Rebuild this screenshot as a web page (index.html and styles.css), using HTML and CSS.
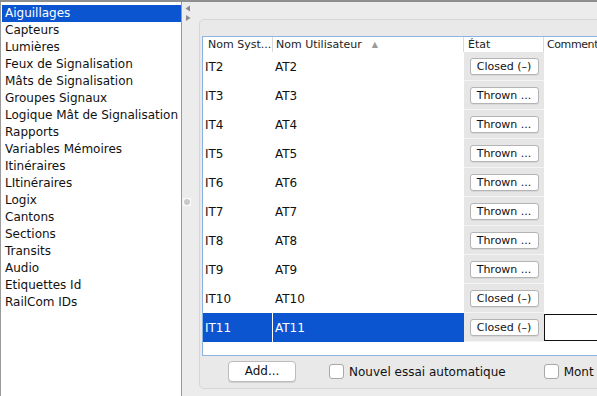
FILE: index.html
```html
<!DOCTYPE html>
<html lang="fr">
<head>
<meta charset="utf-8">
<link rel="stylesheet" href="styles.css">
</head>
<body>
<div class="topline"></div>
<div class="app">
  <ul class="list">
    <li class="sel">Aiguillages</li>
    <li>Capteurs</li>
    <li>Lumières</li>
    <li>Feux de Signalisation</li>
    <li>Mâts de Signalisation</li>
    <li>Groupes Signaux</li>
    <li>Logique Mât de Signalisation</li>
    <li>Rapports</li>
    <li>Variables Mémoires</li>
    <li>Itinéraires</li>
    <li>LItinéraires</li>
    <li>Logix</li>
    <li>Cantons</li>
    <li>Sections</li>
    <li>Transits</li>
    <li>Audio</li>
    <li>Etiquettes Id</li>
    <li>RailCom IDs</li>
  </ul>
  <div class="splitter">
    <div class="arrows">
      <svg width="6" height="16" viewBox="0 0 6 16"><path d="M5 0.5 L0.5 3.5 L5 6.5 Z" fill="#8a8a8a"/><path d="M1 10 L5.5 13 L1 16 Z" fill="#8a8a8a"/></svg>
    </div>
    <div class="grip"><span></span></div>
  </div>
  <div class="right">
    <div class="panel">
      <div class="strip"></div>
      <div class="table">
        <div class="row head">
          <div class="c c1">Nom Syst...</div>
          <div class="c c2">Nom Utilisateur <span class="sort">▲</span></div>
          <div class="c c3">État</div>
          <div class="c c4">Comment</div>
        </div>
        <div class="row"><div class="c c1">IT2</div><div class="c c2">AT2</div><div class="c c3"><span class="btn">Closed (–)</span></div><div class="c c4"></div></div>
        <div class="row"><div class="c c1">IT3</div><div class="c c2">AT3</div><div class="c c3"><span class="btn">Thrown ...</span></div><div class="c c4"></div></div>
        <div class="row"><div class="c c1">IT4</div><div class="c c2">AT4</div><div class="c c3"><span class="btn">Thrown ...</span></div><div class="c c4"></div></div>
        <div class="row"><div class="c c1">IT5</div><div class="c c2">AT5</div><div class="c c3"><span class="btn">Thrown ...</span></div><div class="c c4"></div></div>
        <div class="row"><div class="c c1">IT6</div><div class="c c2">AT6</div><div class="c c3"><span class="btn">Thrown ...</span></div><div class="c c4"></div></div>
        <div class="row"><div class="c c1">IT7</div><div class="c c2">AT7</div><div class="c c3"><span class="btn">Thrown ...</span></div><div class="c c4"></div></div>
        <div class="row"><div class="c c1">IT8</div><div class="c c2">AT8</div><div class="c c3"><span class="btn">Thrown ...</span></div><div class="c c4"></div></div>
        <div class="row"><div class="c c1">IT9</div><div class="c c2">AT9</div><div class="c c3"><span class="btn">Thrown ...</span></div><div class="c c4"></div></div>
        <div class="row"><div class="c c1">IT10</div><div class="c c2">AT10</div><div class="c c3"><span class="btn">Closed (–)</span></div><div class="c c4"></div></div>
        <div class="row selrow"><div class="c c1">IT11</div><div class="c c2">AT11</div><div class="c c3"><span class="btn">Closed (–)</span></div><div class="c c4"><div class="edit"></div></div></div>
      </div>
      <div class="bottom">
        <span class="addbtn">Add...</span>
        <label class="chk chk1"><span class="box"></span>Nouvel essai automatique</label>
        <label class="chk chk2"><span class="box"></span>Mont</label>
      </div>
    </div>
  </div>
</div>
</body>
</html>
```
FILE: styles.css
```css
html, body {
  margin: 0;
  padding: 0;
  width: 597px;
  height: 396px;
  overflow: hidden;
  background: #ececec;
  font-family: "DejaVu Sans", sans-serif;
  color: #111;
}
.topline {
  height: 2px;
  background: #8e8e8e;
}
.app {
  display: flex;
  height: 394px;
}
.list {
  list-style: none;
  margin: 0;
  padding: 3px 0 0 1px;
  width: 179px;
  background: #fff;
  border-left: 1px solid #9a9a9a;
  border-right: 1px solid #9a9a9a;
  font-size: 12px;
}
.list li {
  height: 17px;
  line-height: 17px;
  padding-left: 3px;
  white-space: nowrap;
}
.list li.sel {
  background: #0b55d0;
  color: #fff;
}
.splitter {
  width: 16px;
  display: flex;
  flex-direction: column;
  align-items: flex-start;
}
.arrows {
  margin: 3px 0 0 3px;
  height: 16px;
}
.arrows svg { display: block; }
.grip {
  margin: 177px 0 0 1px;
  width: 8px;
  height: 8px;
  background: #fafafa;
  display: flex;
  align-items: center;
  justify-content: center;
}
.grip span {
  width: 6px;
  height: 6px;
  border-radius: 50%;
  background: #c8c8c8;
}
.right {
  flex: 1;
  padding: 17px 0 0 1px;
  overflow: hidden;
}
.panel {
  width: 420px;
  height: 368px;
  border: 1px solid #d6d6d6;
  border-radius: 5px;
  background: #e9e9e9;
  display: flex;
  flex-direction: column;
}
.strip {
  height: 16px;
}
.table {
  margin-left: 2px;
  height: 318px;
  border: 1px solid #8db3e2;
  border-right: none;
  background: #fff;
  font-size: 12px;
}
.row {
  display: flex;
  height: 29px;
  align-items: stretch;
}
.row.head {
  height: 15px;
  font-size: 11px;
  color: #222;
}
.c {
  display: flex;
  align-items: center;
  white-space: nowrap;
  overflow: hidden;
  box-sizing: border-box;
  flex: none;
}
.c1 { width: 70px; padding-left: 2px; }
.c2 { width: 191px; padding-left: 2px; }
.c3 { width: 80px; justify-content: center; background: #e6e6e6; border-bottom: 1px solid #f4f4f4; }
.c4 { width: 60px; padding-left: 0; }
.head .c { background: #fff; border: none; }
.head .c1 { padding-left: 5px; border-right: 1px solid #d9d9d9; }
.head .c2 { padding-left: 3px; border-right: 1px solid #d9d9d9; }
.head .c3 { padding-left: 4px; justify-content: flex-start; border-right: 1px solid #d9d9d9; }
.head .c4 { padding-left: 3px; letter-spacing: -0.4px; }
.sort {
  font-size: 8px;
  color: #9a9a9a;
  margin-left: 10px;
}
.btn {
  display: inline-block;
  width: 67px;
  height: 15px;
  line-height: 15px;
  text-align: center;
  font-size: 11px;
  background: #fff;
  border: 1px solid #b4b4b4;
  border-radius: 3px;
  box-shadow: 0 1px 0 #d8d8d8;
}
.selrow .c1, .selrow .c2 {
  background: #0b55d0;
  color: #fff;
}
.selrow .c1 { border-right: 1px solid #fff; }
.edit {
  width: 56px;
  height: 27px;
  border: 1px solid #111;
  background: #fff;
  box-sizing: border-box;
}
.bottom {
  display: flex;
  align-items: center;
  height: 31px;
  font-size: 12px;
}
.addbtn {
  margin-left: 28px;
  width: 66px;
  height: 19px;
  line-height: 19px;
  text-align: center;
  background: #fff;
  border: 1px solid #bcbcbc;
  border-radius: 4px;
  box-shadow: 0 1px 0 #d0d0d0;
}
.chk {
  display: flex;
  align-items: center;
  white-space: nowrap;
}
.chk1 { margin-left: 33px; }
.chk2 { margin-left: 38px; }
.box {
  width: 13px;
  height: 13px;
  border: 1px solid #a8a8a8;
  border-radius: 3px;
  background: #fff;
  margin-right: 5px;
}
```
